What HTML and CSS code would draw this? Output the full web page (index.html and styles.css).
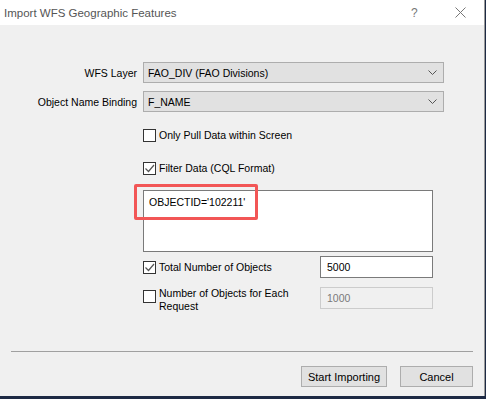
FILE: index.html
```html
<!DOCTYPE html>
<html lang="en">
<head>
    <meta charset="UTF-8">
    <title>Import WFS Geographic Features</title>
    <link rel="stylesheet" href="styles.css">
</head>
<body>
<div class="dialog">
    <div class="title-bar">
        <span class="title">Import WFS Geographic Features</span>
        <span class="help-btn">?</span>
        <span class="close-btn">
            <svg width="11" height="11" viewBox="0 0 11 11"><path d="M0.5 0.5 L10.5 10.5 M10.5 0.5 L0.5 10.5" stroke="#777" stroke-width="1" fill="none"/></svg>
        </span>
    </div>

    <div class="dialog-body">
        <div class="form-grid">
            <label class="field-label">WFS Layer</label>
            <div class="combo">
                <span>FAO_DIV (FAO Divisions)</span>
                <svg class="combo-arrow" width="9" height="5" viewBox="0 0 9 5"><path d="M0.5 0.5 L4.5 4.5 L8.5 0.5" stroke="#555" fill="none"/></svg>
            </div>
            <label class="field-label">Object Name Binding</label>
            <div class="combo">
                <span>F_NAME</span>
                <svg class="combo-arrow" width="9" height="5" viewBox="0 0 9 5"><path d="M0.5 0.5 L4.5 4.5 L8.5 0.5" stroke="#555" fill="none"/></svg>
            </div>
        </div>

        <div class="options">
            <div class="check-row row-screen">
                <span class="check-box"></span>
                <span>Only Pull Data within Screen</span>
            </div>
            <div class="check-row row-filter">
                <span class="check-box">
                    <svg width="11" height="11" viewBox="0 0 11 11"><path d="M1.5 5.5 L4.5 8.5 L10 2" stroke="#555" stroke-width="1.2" fill="none"/></svg>
                </span>
                <span>Filter Data (CQL Format)</span>
            </div>
            <div class="cql-box">
                <span>OBJECTID='102211'</span>
                <div class="highlight"></div>
            </div>
            <div class="count-row row-total">
                <div class="check-row">
                    <span class="check-box">
                        <svg width="11" height="11" viewBox="0 0 11 11"><path d="M1.5 5.5 L4.5 8.5 L10 2" stroke="#555" stroke-width="1.2" fill="none"/></svg>
                    </span>
                    <span>Total Number of Objects</span>
                </div>
                <div class="num-input">5000</div>
            </div>
            <div class="count-row row-each">
                <div class="check-row">
                    <span class="check-box"></span>
                    <span class="two-line">Number of Objects for Each<br>Request</span>
                </div>
                <div class="num-input disabled">1000</div>
            </div>
        </div>

        <div class="separator"></div>

        <div class="buttons">
            <button class="btn btn-start">Start Importing</button>
            <button class="btn btn-cancel">Cancel</button>
        </div>
    </div>
</div>
<div class="desktop-strip"></div>
</body>
</html>
```

FILE: styles.css
```css
body {
    margin: 0;
    width: 486px;
    height: 399px;
    overflow: hidden;
    background: #1d2a44;
    font-family: "Liberation Sans", Arial, sans-serif;
    font-size: 10.5px;
    color: #000;
}
.dialog {
    width: 484px;
    height: 396px;
    background: #f0f0f0;
    border-right: 1px solid #9a9a9a;
    display: flex;
    flex-direction: column;
}
.title-bar {
    height: 25px;
    background: #fff;
    display: flex;
    align-items: center;
    padding-left: 4px;
}
.title {
    color: #555;
    font-size: 11.5px;
    flex: 1;
}
.help-btn {
    color: #777;
    font-size: 12px;
    width: 14px;
    margin-right: 30px;
}
.close-btn {
    width: 11px;
    height: 11px;
    margin-right: 18px;
    display: flex;
}
.dialog-body {
    flex: 1;
    display: flex;
    flex-direction: column;
}
.form-grid {
    display: grid;
    grid-template-columns: 137px 301px;
    column-gap: 6px;
    row-gap: 8px;
    margin-top: 37px;
}
.field-label {
    text-align: right;
    align-self: center;
}
.combo {
    height: 19px;
    background: #e1e1e1;
    border: 1px solid #adadad;
    display: flex;
    align-items: center;
    padding-left: 4px;
    padding-right: 6px;
}
.combo span {
    flex: 1;
}
.options {
    margin-left: 143px;
    width: 290px;
    margin-top: 12px;
    display: flex;
    flex-direction: column;
}
.check-row {
    display: flex;
    align-items: center;
    height: 22px;
    gap: 3px;
}
.row-filter {
    margin-top: 11px;
}
.check-box {
    width: 11px;
    height: 11px;
    border: 1px solid #333;
    background: #fff;
    display: flex;
    flex-shrink: 0;
}
.cql-box {
    position: relative;
    margin-top: 11px;
    height: 56px;
    background: #fff;
    border: 1px solid #7a7a7a;
    padding: 2px 5px;
}
.cql-box span {
    display: block;
    margin-top: 3px;
}
.highlight {
    position: absolute;
    left: -10px;
    top: -7px;
    width: 118px;
    height: 30px;
    border: 3.5px solid #f25656;
    border-radius: 2px;
}
.count-row {
    display: flex;
    justify-content: space-between;
    align-items: center;
}
.row-total {
    margin-top: 4px;
}
.row-each {
    margin-top: 9px;
    align-items: flex-start;
}
.row-each .check-row {
    align-items: flex-start;
    height: auto;
}
.row-each .check-box {
    margin-top: 3px;
}
.two-line {
    line-height: 13px;
}
.num-input {
    width: 105px;
    height: 20px;
    border: 1px solid #7a7a7a;
    background: #fff;
    padding-left: 6px;
    display: flex;
    align-items: center;
}
.num-input.disabled {
    background: #f0f0f0;
    border-color: #cccccc;
    color: #7a7a7a;
}
.separator {
    margin: 38px 11px 0 11px;
    border-top: 1px solid #a0a0a0;
}
.buttons {
    display: flex;
    justify-content: flex-end;
    gap: 13px;
    margin-top: 14px;
    padding-right: 11px;
}
.btn {
    height: 21px;
    background: #e1e1e1;
    border: 1px solid #adadad;
    font-family: "Liberation Sans", Arial, sans-serif;
    font-size: 11px;
    padding: 0;
}
.btn-start {
    width: 86px;
}
.btn-cancel {
    width: 73px;
}
.desktop-strip {
    height: 3px;
}
```
